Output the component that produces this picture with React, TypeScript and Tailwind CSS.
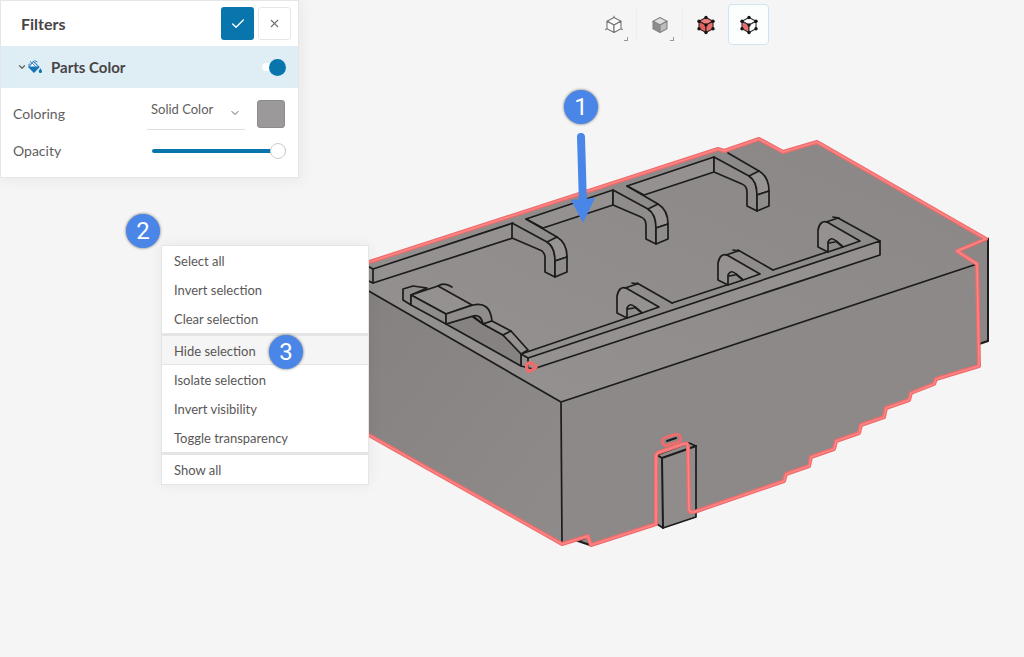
import type { ReactNode } from 'react';
import { Check, ChevronDown, X } from 'lucide-react';

function PaintBucket() {
  return (
    <svg viewBox="0 0 16 16" className="h-4 w-4" aria-hidden="true">
      <path d="M6.5 2.5 12 8l-5 5.2-5.2-5.2z" fill="#fff" stroke="#3a86c8" strokeWidth="1.1" />
      <path d="M1.8 8 12 8l-5 5.2z" fill="#1672b6" stroke="#1672b6" strokeWidth="1" />
      <path d="M3 2.2 9.2 8M7.5 1.5l3 1.500M1 6.4l2.4-2" stroke="#3a86c8" strokeWidth="1" fill="none" />
      <path d="M13.4 9.200c1 1.600 1.600 2.400 1.600 3.200a1.600 1.600 0 0 1-3.200 0c0-.8.6-1.600 1.600-3.200z" fill="#0876ad" />
    </svg>
  );
}

type CubeProps = {
  line: string;
  top: string;
  left: string;
  right: string;
  vertices?: boolean;
  ticks?: boolean;
};

function Cube({ line, top, left, right, vertices, ticks }: CubeProps) {
  return (
    <svg viewBox="0 0 20 20" className="h-5 w-5" aria-hidden="true">
      <g stroke={line} strokeWidth="1.1" strokeLinejoin="round">
        <path d="M10 2.500 17 6.200 10 10 3 6.200z" fill={top} />
        <path d="M3 6.200 10 10v7.500L3 13.800z" fill={left} />
        <path d="M17 6.200 10 10v7.500l7-3.700z" fill={right} />
      </g>
      {ticks && (
        <path d="M10 .8v2M3 13.800l-1.800 1M17 13.800l1.800 1" stroke={line} strokeWidth="1.100" />
      )}
      {vertices && (
        <g fill="#151515">
          <circle cx="10" cy="2.500" r="1.700" />
          <circle cx="3" cy="6.200" r="1.700" />
          <circle cx="17" cy="6.200" r="1.700" />
          <circle cx="10" cy="10" r="1.700" />
          <circle cx="3" cy="13.800" r="1.700" />
          <circle cx="17" cy="13.800" r="1.700" />
          <circle cx="10" cy="17.500" r="1.700" />
        </g>
      )}
    </svg>
  );
}

function ToolButton({ label, active, more, children }: { label: string; active?: boolean; more?: boolean; children: ReactNode }) {
  return (
    <button
      type="button"
      aria-label={label}
      className={
        active
          ? 'relative flex h-[41px] w-[41px] items-center justify-center rounded-sm border border-[#cfe6f2] bg-[#fcfdfd]'
          : 'relative flex h-[41px] w-[41px] items-center justify-center'
      }
    >
      {children}
      {more && <span className="absolute right-1.5 bottom-1 h-1 w-1 border-r border-b border-[#999]" />}
    </button>
  );
}

function Toolbar() {
  return (
    <div className="flex items-center gap-[2px]">
      <ToolButton label="Wireframe view" more>
        <Cube line="#777" top="#fafafa" left="#fafafa" right="#fafafa" ticks />
      </ToolButton>
      <span className="h-8 w-px bg-[#ededed]" />
      <ToolButton label="Shaded view" more>
        <Cube line="#868686" top="#dedede" left="#8d8d8d" right="#bcbcbc" />
      </ToolButton>
      <span className="h-8 w-px bg-[#ededed]" />
      <ToolButton label="Select volumes">
        <Cube line="#3a2020" top="#f08080" left="#e46060" right="#e87070" vertices />
      </ToolButton>
      <ToolButton label="Select faces" active>
        <Cube line="#333" top="#fff" left="#e87070" right="#fff" vertices />
      </ToolButton>
    </div>
  );
}

function FiltersPanel() {
  return (
    <section className="w-[299px] shrink-0 border border-[#e6e6e6] bg-white pb-3.5 shadow-[2px_2px_14px_rgba(0,0,0,0.06)]">
      <header className="flex h-[45px] items-center gap-1 pr-[7px] pl-5">
        <h2 className="flex-1 text-base leading-5 font-bold text-[#484545]">Filters</h2>
        <button type="button" aria-label="Apply" className="flex h-[33px] w-[33px] items-center justify-center rounded-[3px] bg-[#0876ad] text-white">
          <Check size={16} strokeWidth={2} />
        </button>
        <button type="button" aria-label="Close" className="flex h-[33px] w-[33px] items-center justify-center rounded-[3px] border border-[#e6e6e6] text-[#707070]">
          <X size={13} strokeWidth={2} />
        </button>
      </header>
      <div className="flex h-[42px] items-center bg-[#dfedf5] pr-3 pl-4">
        <ChevronDown size={10} strokeWidth={3} className="text-[#666]" />
        <PaintBucket />
        <h3 className="ml-2 flex-1 text-[15px] font-bold text-[#484545]">Parts Color</h3>
        <label className="flex items-center">
          <input type="checkbox" defaultChecked aria-label="Parts Color" className="peer sr-only" />
          <span className="flex h-2 w-6 items-center justify-end rounded-full bg-white">
            <span className="h-[17px] w-[17px] shrink-0 rounded-full bg-[#0876ad]" />
          </span>
        </label>
      </div>
      <div className="flex h-[51px] items-center pr-[13px] pl-3 text-sm text-[#5e5e5e]">
        <label htmlFor="coloring" className="flex-1">
          Coloring
        </label>
        <div className="relative mr-3 w-[98px] border-b border-[#dedede]">
          <select id="coloring" className="h-8 w-full appearance-none bg-transparent pb-2 pl-1 text-[13px]">
            <option>Solid Color</option>
          </select>
          <ChevronDown size={12} strokeWidth={2} className="pointer-events-none absolute right-1 bottom-2.5" />
        </div>
        <button type="button" aria-label="Color" className="h-7 w-7 rounded-[3px] border border-[#8d8b8b] bg-[#9b9999]" />
      </div>
      <div className="flex h-6 items-center pr-3 pl-3 text-sm text-[#5e5e5e]">
        <label htmlFor="opacity" className="flex-1">
          Opacity
        </label>
        <input
          id="opacity"
          type="range"
          defaultValue={100}
          className="h-5 w-[134px] appearance-none bg-transparent [&::-webkit-slider-runnable-track]:h-1 [&::-webkit-slider-runnable-track]:rounded-full [&::-webkit-slider-runnable-track]:bg-[#0876ad] [&::-webkit-slider-thumb]:-mt-1.5 [&::-webkit-slider-thumb]:h-4 [&::-webkit-slider-thumb]:w-4 [&::-webkit-slider-thumb]:appearance-none [&::-webkit-slider-thumb]:rounded-full [&::-webkit-slider-thumb]:border [&::-webkit-slider-thumb]:border-[#cccccc] [&::-webkit-slider-thumb]:bg-white"
        />
      </div>
    </section>
  );
}

function Bracket({ x, y }: { x: number; y: number }) {
  return (
    <g transform={`translate(${x} ${y})`}>
      <path d="M0 0 35 19Q43 24 43 38V54L33 49V35Q33 29 28 27L0 15z" />
      <path d="M35 19 45 14Q55 20 55 34L43 38Q43 24 35 19z" fill="#989493" />
      <path d="M43 38 55 34V49L43 54z" />
      <path d="M14-4 45 14" fill="none" />
    </g>
  );
}

function Hook({ x, y }: { x: number; y: number }) {
  return (
    <g transform={`translate(${x} ${y})`}>
      <path d="M0 0V-17Q2-27 9-25L42-6 25 0 18-6Q13-11 10-5V5z" fill="#949190" />
      <path d="M10 5 25 0 18-6" fill="none" />
      <path d="M11-4 17-5" fill="none" />
      <path d="M8-25 20-29M15-30 21-29" fill="none" />
    </g>
  );
}

const outline =
  'M360 265 718 149 724 151 759 139 783 152 817 142 986 239 957 251 977 264 979 366 936 379 934 384 911 393 909 400 886 408 884 417 861 425 859 433 836 441 834 449 811 457 809 466 786 474 784 481 697 511Q689 514 689 509L688 447Q688 442 683 444L660 452Q656 453 656 456V524L591 545 588 536 562 544 360 430';

function Model() {
  return (
    <svg viewBox="0 0 1024 657" className="h-full w-full" role="img" aria-label="Building model">
      <defs>
        <linearGradient id="roof" x1="0" y1="1" x2="1" y2="0">
          <stop offset="0" stopColor="#969291" />
          <stop offset="1" stopColor="#8a8685" />
        </linearGradient>
        <linearGradient id="side" x1="0" y1="0" x2="1" y2="1">
          <stop offset="0" stopColor="#858180" />
          <stop offset="1" stopColor="#8f8b8a" />
        </linearGradient>
      </defs>
      <path d="M957 251 988 239V341L979 344 977 264z" fill="#8b8786" stroke="#1c1c1c" strokeWidth="2" />
      <path d="M578 541 590 545V536z" fill="#8b8786" stroke="#1c1c1c" strokeWidth="2" />
      <path d={`${outline}z`} fill="#8d8988" />
      <path d="M360 265 718 149 724 151 759 139 783 152 817 142 986 239 957 251 977 264 561 402 360 286z" fill="url(#roof)" />
      <path d="M360 286 561 402 562 543 360 430z" fill="url(#side)" />

      <g fill="#908c8b" stroke="#1c1c1c" strokeWidth="1.700" strokeLinejoin="round" strokeLinecap="round">
        <path d="M360 286 561 402 977 264M561 402 562 543" fill="none" />
        <path d="M360 262 373 269 513 223V238L373 283 360 277" fill="#959190" />
        <path d="M373 269V283" />
        <path d="M526 219 613 190V205L543 228z" fill="#959190" />
        <path d="M627 186 714 157V172L644 195z" fill="#959190" />
        <Bracket x={512} y={223} />
        <Bracket x={613} y={190} />
        <Bracket x={714} y={157} />

        <path d="M521 354 528 358 880 241V255L533 369 521 366z" fill="#959190" />
        <path d="M521 354 627 318M672 303 727 285M773 270 827 252" fill="none" />
        <path d="M637 283 672 303M738 250 773 270M838 218 880 241" fill="none" />
        <path d="M528 358V368" fill="none" />
        <Hook x={617} y={313} />
        <Hook x={718} y={280} />
        <Hook x={818} y={247} />

        <path d="M403 289 413 286 427 288 411 295 411 305 403 300z" />
        <path d="M411 295 438 286 472 305 446 314z" fill="#949190" />
        <path d="M411 295 446 314V324L411 305z" />
        <path d="M438 286Q444 282 452 287" fill="none" />
        <path d="M446 324 473 316 483 324 503 335 521 353V366z" fill="#868281" />
        <path d="M446 314 473 305Q490 301 492 321L483 324Q481 314 473 316L446 324z" />
        <path d="M473 317 483 324" fill="none" />
        <path d="M483 324 492 321 511 331 528 350 521 354 503 335z" fill="#959190" />
        <path d="M503 335 511 331" />

        <path d="M657 455 689 443 696 446V517L663 528 657 524z" />
        <path d="M657 455 662 458 696 446M662 458 663 528" fill="none" strokeWidth="2" />
        <path d="M667 441 676 438" strokeWidth="2" />
      </g>

      <g fill="none" strokeLinejoin="round" strokeLinecap="round">
        <path d={outline} stroke="#ee6c6c" strokeWidth="4" />
        <path d={outline} stroke="#ff8585" strokeWidth="1.500" />
        <rect x="662" y="436" width="19" height="8" rx="4" transform="rotate(-17 671 440)" stroke="#ee6c6c" strokeWidth="3" />
        <path d="M527 364Q531 361 536 367 533 371 528 371 526 368 527 364z" stroke="#f26b6b" strokeWidth="3.500" />
      </g>

      <path d="M581 137 583 205" stroke="#4a86e8" strokeWidth="8" strokeLinecap="round" />
      <path d="M571 200 595 198 583 223z" fill="#4a86e8" />
    </svg>
  );
}

function Badge({ children }: { children: ReactNode }) {
  return (
    <span className="flex h-[34px] w-[34px] items-center justify-center rounded-full bg-[#4a86e8] font-[Roboto,sans-serif] text-2xl leading-none text-white shadow-[0_0_3px_rgba(0,0,0,0.6)]">
      {children}
    </span>
  );
}

const menuGroups = [
  ['Select all', 'Invert selection', 'Clear selection'],
  ['Hide selection', 'Isolate selection', 'Invert visibility', 'Toggle transparency'],
  ['Show all'],
];

function ContextMenu() {
  return (
    <div role="menu" className="w-52 divide-y-3 divide-[#e4e6e6] border border-[#e4e6e6] bg-white text-[13px] text-[#5a5757] shadow-[0_0_14px_rgba(0,0,0,0.06)]">
      {menuGroups.map((group) => (
        <div key={group[0]} role="group">
          {group.map((item) => (
            <button
              key={item}
              type="button"
              role="menuitem"
              className={
                item === 'Hide selection'
                  ? 'block h-[29px] w-full bg-[#f5f5f5] px-3 pt-[2px] text-left shadow-[inset_0_-1px_0_#e4e6e6]'
                  : 'block h-[29px] w-full px-3 pt-[2px] text-left'
              }
            >
              {item}
            </button>
          ))}
        </div>
      ))}
    </div>
  );
}

export default function App() {
  return (
    <main className="relative min-h-screen overflow-hidden bg-[#f5f5f5] font-[Lato,sans-serif]">
      <div className="absolute top-0 left-0 aspect-[1024/657] w-full">
        <Model />
      </div>
      <div className="relative flex items-start">
        <FiltersPanel />
        <div className="ml-[294px] pt-1">
          <Toolbar />
        </div>
      </div>
      <div className="absolute top-[245px] left-[161px]">
        <ContextMenu />
      </div>
      <div className="absolute top-[90px] left-[564px]">
        <Badge>1</Badge>
      </div>
      <div className="absolute top-[214px] left-[126px]">
        <Badge>2</Badge>
      </div>
      <div className="absolute top-[335px] left-[269px]">
        <Badge>3</Badge>
      </div>
    </main>
  );
}
